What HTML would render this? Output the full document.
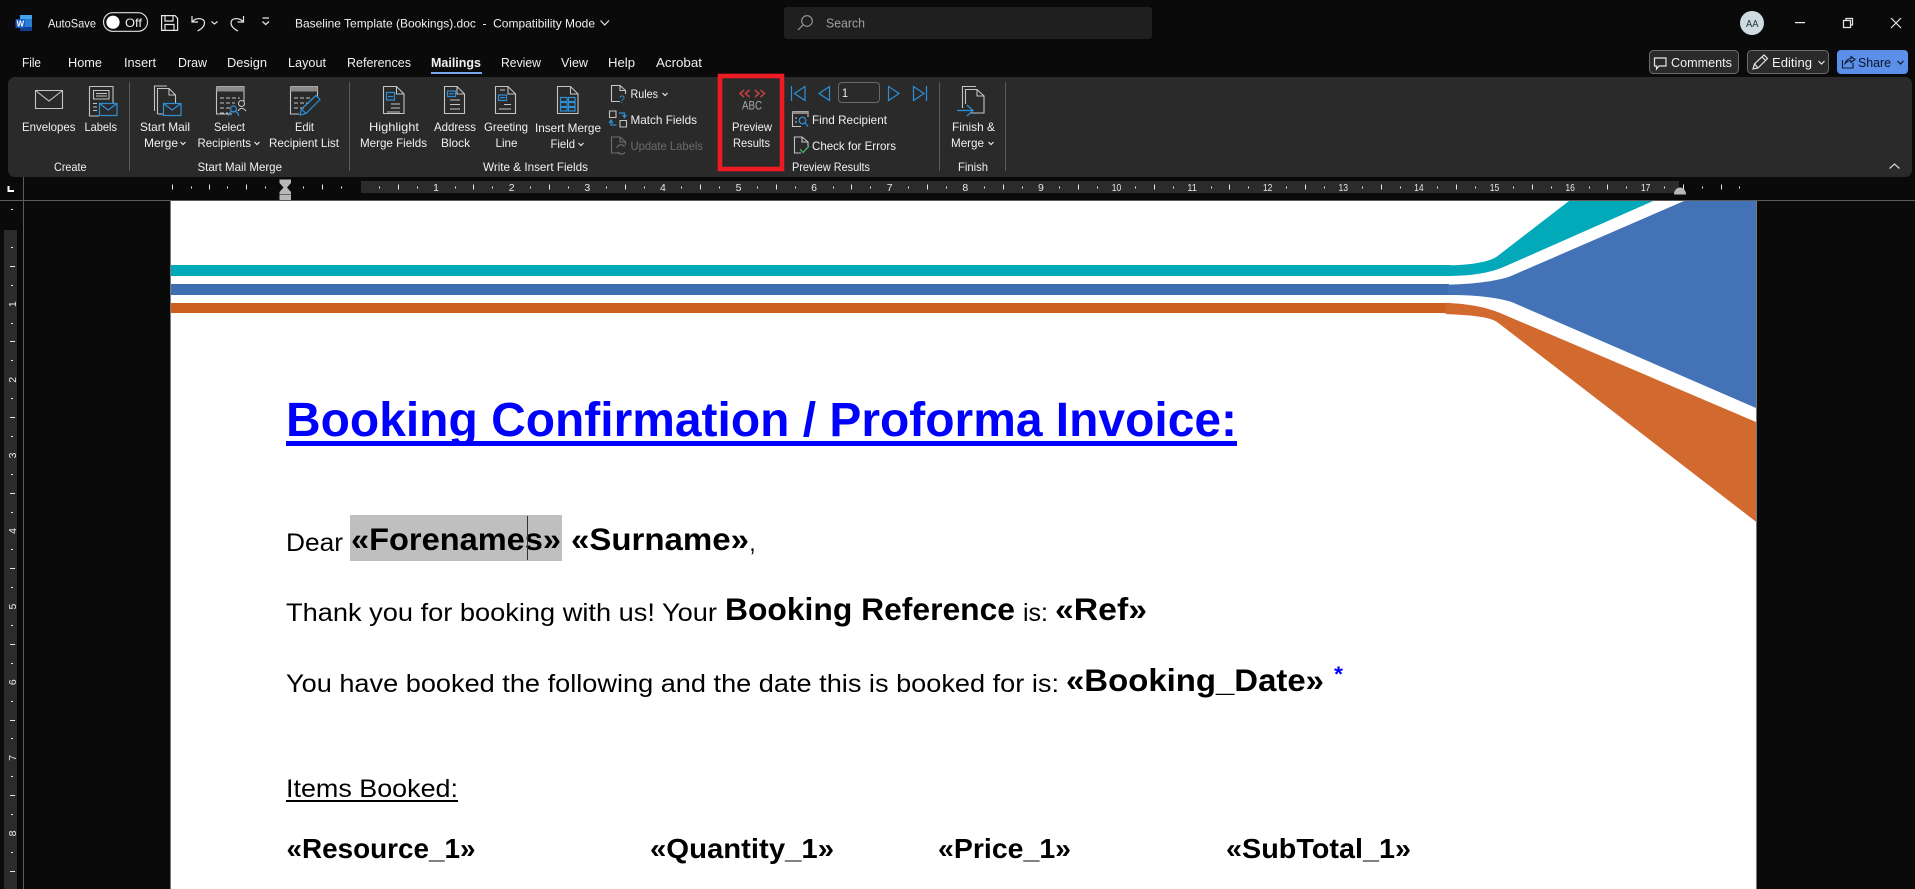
<!DOCTYPE html>
<html><head><meta charset="utf-8"><title>Baseline Template (Bookings).doc</title>
<style>
html,body{margin:0;padding:0;background:#0a0a0a;width:1915px;height:889px;overflow:hidden}
svg{display:block;font-family:"Liberation Sans",sans-serif}
text{white-space:pre}
.u{font-size:12px;fill:#f0f0f0}
.t{font-size:12.5px;fill:#f0f0f0}
.n{font-size:10.5px;fill:#e8e8e8}
.b{font-size:25px;fill:#000}
.bb{font-weight:700;fill:#000}
.ic{fill:none;stroke:#c4c4c4;stroke-width:1.1}
.bl{fill:none;stroke:#2f8fd6;stroke-width:1.2}
.w{fill:none;stroke:#e6e6e6;stroke-width:1.2}
</style></head><body>
<svg width="1915" height="889" viewBox="0 0 1915 889" xmlns="http://www.w3.org/2000/svg">
<rect width="1915" height="889" fill="#0a0a0a"/>

<!-- title bar -->
<rect x="20" y="15" width="12" height="16" rx="1" fill="#2b7cd3"/><rect x="20" y="15" width="12" height="4" fill="#41a5ee"/><rect x="20" y="27" width="12" height="4" fill="#103f91"/>
<rect x="15.5" y="19" width="9.5" height="9" rx="1" fill="#185abd"/><text x="16.6" y="26.6" font-size="8.5" font-weight="700" fill="#fff" textLength="7.5" lengthAdjust="spacingAndGlyphs">W</text>
<text class="u" x="48" y="27.5" textLength="48" lengthAdjust="spacingAndGlyphs">AutoSave</text>
<rect x="103.5" y="12.7" width="44" height="18.6" rx="9.3" fill="none" stroke="#e0e0e0" stroke-width="1.1"/><circle cx="113" cy="22.2" r="6.6" fill="#fff"/><text class="u" x="125" y="27" textLength="17" lengthAdjust="spacingAndGlyphs">Off</text>
<path class="w" d="M161.6 15.6H175L177.6 18.2V30.4H161.6ZM165 15.6V21H173V15.6M165 30.4V24.5H174V30.4"/>
<path class="w" d="M192 16V22H198M192.5 21.5C196 17.5 204.5 17.5 204.5 23C204.5 26 201.5 29 197.5 31"/>
<path class="w" d="M211.5 21.5L214.5 24L217.5 21.5"/>
<path class="w" d="M243.5 16V22H237.5M243 21.5C239 17.5 231 17.5 231 23C231 26 234 29 238 31"/>
<path class="w" d="M262.5 18H269M262.5 21.5L265.7 24.5L269 21.5"/>
<text class="u" x="295" y="27.5" textLength="300" lengthAdjust="spacingAndGlyphs">Baseline Template (Bookings).doc  -  Compatibility Mode</text>
<path class="w" d="M600.5 20.5L604.7 25L609 20.5"/>
<rect x="784" y="7" width="368" height="32" rx="3" fill="#1f1f1f"/>
<circle cx="807" cy="21" r="5.3" fill="none" stroke="#9a9a9a" stroke-width="1.1"/><path d="M803 25L798 30" stroke="#9a9a9a" stroke-width="1.2"/>
<text x="826" y="27.5" font-size="12.5" fill="#a0a0a0" textLength="39" lengthAdjust="spacingAndGlyphs">Search</text>
<circle cx="1752" cy="23" r="12" fill="#cfdbe1"/><text x="1746" y="27" font-size="10.5" fill="#1d3540" textLength="12.5" lengthAdjust="spacingAndGlyphs">AA</text>
<rect x="1795" y="22" width="10" height="1.2" fill="#eee"/>
<path class="w" d="M1843.5 20.5H1850.5V27.5H1843.5ZM1846 20.5V18.5H1852.5V25H1850.5"/>
<path class="w" d="M1891 18L1901 28M1901 18L1891 28"/>

<!-- tabs -->
<text class="t" x="22" y="67" textLength="19" lengthAdjust="spacingAndGlyphs">File</text>
<text class="t" x="68" y="67" textLength="34" lengthAdjust="spacingAndGlyphs">Home</text>
<text class="t" x="124" y="67" textLength="32" lengthAdjust="spacingAndGlyphs">Insert</text>
<text class="t" x="178" y="67" textLength="29" lengthAdjust="spacingAndGlyphs">Draw</text>
<text class="t" x="227" y="67" textLength="40" lengthAdjust="spacingAndGlyphs">Design</text>
<text class="t" x="288" y="67" textLength="38" lengthAdjust="spacingAndGlyphs">Layout</text>
<text class="t" x="347" y="67" textLength="64" lengthAdjust="spacingAndGlyphs">References</text>
<text class="t" x="431" y="67" font-weight="700" fill="#fff" textLength="50" lengthAdjust="spacingAndGlyphs">Mailings</text>
<text class="t" x="501" y="67" textLength="40" lengthAdjust="spacingAndGlyphs">Review</text>
<text class="t" x="561" y="67" textLength="27" lengthAdjust="spacingAndGlyphs">View</text>
<text class="t" x="608" y="67" textLength="27" lengthAdjust="spacingAndGlyphs">Help</text>
<text class="t" x="656" y="67" textLength="46" lengthAdjust="spacingAndGlyphs">Acrobat</text>
<rect x="431" y="72" width="51" height="2" fill="#79a6e8"/>

<!-- top right buttons -->
<rect x="1649.5" y="50.5" width="89" height="23" rx="4" fill="#2a2a2a" stroke="#6c6c6c"/>
<path class="w" d="M1654.5 58H1666V66H1659L1656.5 69V66H1654.5Z"/>
<text class="t" x="1671" y="67" textLength="61" lengthAdjust="spacingAndGlyphs">Comments</text>
<rect x="1747.5" y="50.5" width="81" height="23" rx="4" fill="#2a2a2a" stroke="#6c6c6c"/>
<path class="w" d="M1753 69L1754.5 64L1764 55L1767.5 58.5L1758 68ZM1754.5 64L1758 68M1762 57L1765.5 60.5"/>
<text class="t" x="1772" y="67" textLength="40" lengthAdjust="spacingAndGlyphs">Editing</text>
<path class="w" d="M1818.5 61L1821.5 64L1824.5 61"/>
<rect x="1837" y="50" width="71" height="24" rx="4" fill="#5b8fe9"/>
<path d="M1842.5 60V68H1853V63M1845 63.5C1846 60 1849 58.5 1851 58.5V56.5L1855 59.5L1851 62.5V60.5C1849 60.5 1847 61.5 1845 63.5Z" fill="none" stroke="#0e1a30" stroke-width="1.1"/>
<text x="1858" y="67" font-size="12.5" fill="#0c1526" textLength="33" lengthAdjust="spacingAndGlyphs">Share</text>
<path d="M1897.5 61L1900.5 64L1903.5 61" fill="none" stroke="#0c1526" stroke-width="1.2"/>

<!-- ribbon -->
<rect x="8" y="77" width="1904" height="100" rx="7" fill="#2a2a2a"/>
<rect x="129" y="82" width="1" height="89" fill="#5a5a5a"/><rect x="349" y="82" width="1" height="89" fill="#5a5a5a"/><rect x="939" y="82" width="1" height="89" fill="#5a5a5a"/><rect x="1005" y="82" width="1" height="89" fill="#5a5a5a"/>
<path d="M1889.5 168.5L1894.5 164L1899.5 168.5" fill="none" stroke="#d8d8d8" stroke-width="1.2"/>

<!-- envelopes -->
<path class="ic" d="M35.5 90.5H62.5V108.5H35.5ZM35.5 90.5L49 101L62.5 90.5"/>
<!-- labels -->
<path class="ic" d="M89.5 86.5H113V103M99 116H89.5V86.5M93.5 90.5H109V99H93.5ZM96 93.5H107M96 96H107M93 103.5H97M93 107H97M93 110.5H97"/>
<path class="bl" d="M99.5 103.5H117V115.5H99.5ZM99.5 103.5L108.2 110L117 103.5"/>
<!-- start mail merge -->
<path class="ic" d="M154.5 111V86H167M157.5 114V88.5H169L175.5 95V103M169 88.5V95H175.5M157.5 114H163"/>
<path class="bl" d="M163.5 103.5H181V115.5H163.5ZM163.5 103.5L172.2 110L181 103.5"/>
<!-- select recipients -->
<path class="ic" d="M216.5 86.5H244V102M232 114H216.5V86.5"/><rect x="216.5" y="86.5" width="27.5" height="5" fill="#8a8a8a"/>
<path class="ic" stroke-dasharray="4 2" d="M220 98H240M220 103H235M220 108H230M220 113H228"/>
<circle cx="233.5" cy="109" r="3" class="bl"/><path class="bl" d="M228.5 116C228.5 112 231 111.5 233.5 111.5C236 111.5 238.5 112 238.5 116"/>
<circle cx="241.5" cy="103.5" r="3" class="ic"/><path class="ic" d="M238 111C240 107.5 243.5 107.5 246 111"/>
<!-- edit list -->
<path class="ic" d="M290.5 86.5H317.5V97M290.5 86.5V114H299"/><rect x="290.5" y="86.5" width="27" height="5" fill="#8a8a8a"/>
<path class="ic" stroke-dasharray="4 2" d="M294 98H312M294 103H309M294 108H304"/>
<path class="bl" stroke-width="1.6" d="M300 115L301.5 109L316 95.5L320 99.5L306 113.5ZM301.5 109L306 113.5"/>

<!-- merge docs -->
<path class="ic" d="M383.5 86.5H396.5L404 94V113.5H383.5ZM396.5 86.5V94H404M391 104H400M391 108H400M387 112H400"/><rect x="386.5" y="92.5" width="8" height="7.5" class="bl"/><path class="bl" d="M388 96.5H393"/>
<path class="ic" d="M444.5 86.5H457L464.5 94V113.5H444.5ZM457 86.5V94H464.5M450 100H460M450 104.5H460M450 109H460"/><rect x="447.5" y="91" width="8" height="5.5" class="bl"/><path class="bl" d="M449 93.7H454"/>
<path class="ic" d="M495.5 86.5H508L515.5 94V113.5H495.5ZM508 86.5V94H515.5M500 90H505M504 104.5H511M499 109H511"/><rect x="498.5" y="95" width="8" height="5.5" class="bl"/><path class="bl" d="M500 97.7H505"/>
<path class="ic" d="M557.5 86.5H570.5L578 94V113.5H557.5ZM570.5 86.5V94H578"/><path class="bl" d="M560.5 97.5H567V101.5H560.5ZM568.5 97.5H575V101.5H568.5ZM560.5 102.5H567V106.5H560.5ZM568.5 102.5H575V106.5H568.5ZM560.5 107.5H567V111H560.5ZM568.5 107.5H575V111H568.5Z"/>

<!-- small group icons -->
<path class="ic" d="M620 101.5H611.5V85.5H620L625.5 90.5V94M620 85.5V90.5H625.5"/>
<text x="619" y="103" font-size="11" fill="#2f8fd6" textLength="6" lengthAdjust="spacingAndGlyphs">?</text>
<path class="ic" d="M620 120.5H626.5V127H620ZM609.5 111H616V117.5H609.5Z"/><path class="bl" d="M619 113H624.5V117M622.5 115L624.5 117.5L626.5 115M616.5 125H611V120.5M609 123L611 120L613 123"/>
<path d="M620 153H611.5V137H620L625.5 142V145M620 137V142H625.5" fill="none" stroke="#6e6e6e" stroke-width="1.1"/><path d="M617 148A4 4 0 0 1 624.5 147M625 152A4 4 0 0 1 618 152" fill="none" stroke="#6e6e6e" stroke-width="1.1"/>
<path class="bl" d="M791.5 86V101M805 86.5L794.5 93.5L805 100.5Z"/>
<path class="bl" d="M829.5 86.5L819 93.5L829.5 100.5Z"/>
<rect x="838.5" y="82.5" width="41" height="20" rx="3.5" fill="none" stroke="#6a6a6a"/>
<text class="u" x="842" y="97" textLength="6" lengthAdjust="spacingAndGlyphs">1</text>
<path class="bl" d="M888.5 86.5L899 93.5L888.5 100.5Z"/>
<path class="bl" d="M913.5 86.5L924 93.5L913.5 100.5ZM926.5 86V101"/>
<path class="ic" d="M792.5 111.5H808V117M792.5 111.5V126.5H801M795 118H797M795 122H797"/><rect x="792.5" y="111.5" width="15.5" height="2.5" fill="#8a8a8a"/><circle cx="802.5" cy="120.5" r="3.3" class="bl"/><path class="bl" d="M805 123L808 126.5"/>
<path class="ic" d="M801 153H794.5V137H802L808 142V146M802 137V142H808"/><path d="M800 149L803 152.5L809 146" fill="none" stroke="#49b267" stroke-width="1.3"/>
<!-- finish icon -->
<path class="ic" d="M962.5 108V86.5H976M965.5 104V89.5H977L984 96V113H971M977 89.5V96H984"/>
<path class="bl" d="M957 110.5H972.5M967 105L973 110.5L967 116"/>
<!-- preview -->
<path d="M744 90L740 93.5L744 97M749.5 90L745.5 93.5L749.5 97M755 90L759 93.5L755 97M760.5 90L764.5 93.5L760.5 97" fill="none" stroke="#c7413f" stroke-width="1.5"/>
<text x="742" y="109.5" font-size="11.5" fill="#a8a8a8" textLength="20" lengthAdjust="spacingAndGlyphs">ABC</text>
<rect x="720" y="76" width="62" height="93" fill="none" stroke="#ed1c24" stroke-width="4.6"/>

<!-- ribbon labels -->
<text class="u" x="22" y="131" textLength="53.5" lengthAdjust="spacingAndGlyphs">Envelopes</text>
<text class="u" x="84.5" y="131" textLength="32.5" lengthAdjust="spacingAndGlyphs">Labels</text>
<text class="u" x="140" y="131" textLength="50" lengthAdjust="spacingAndGlyphs">Start Mail</text>
<text class="u" x="144" y="147" textLength="34" lengthAdjust="spacingAndGlyphs">Merge</text>
<text class="u" x="214" y="131" textLength="31" lengthAdjust="spacingAndGlyphs">Select</text>
<text class="u" x="197.5" y="147" textLength="53.5" lengthAdjust="spacingAndGlyphs">Recipients</text>
<text class="u" x="295" y="131" textLength="19" lengthAdjust="spacingAndGlyphs">Edit</text>
<text class="u" x="269" y="147" textLength="70" lengthAdjust="spacingAndGlyphs">Recipient List</text>
<text class="u" x="369" y="131" textLength="50" lengthAdjust="spacingAndGlyphs">Highlight</text>
<text class="u" x="360" y="147" textLength="67" lengthAdjust="spacingAndGlyphs">Merge Fields</text>
<text class="u" x="434" y="131" textLength="42" lengthAdjust="spacingAndGlyphs">Address</text>
<text class="u" x="441" y="147" textLength="29" lengthAdjust="spacingAndGlyphs">Block</text>
<text class="u" x="484" y="131" textLength="44" lengthAdjust="spacingAndGlyphs">Greeting</text>
<text class="u" x="495.5" y="147" textLength="22" lengthAdjust="spacingAndGlyphs">Line</text>
<text class="u" x="535" y="132" textLength="66" lengthAdjust="spacingAndGlyphs">Insert Merge</text>
<text class="u" x="550.5" y="148" textLength="24.5" lengthAdjust="spacingAndGlyphs">Field</text>
<text class="u" x="630.5" y="98" textLength="27.5" lengthAdjust="spacingAndGlyphs">Rules</text>
<text class="u" x="630.5" y="124" textLength="66.5" lengthAdjust="spacingAndGlyphs">Match Fields</text>
<text x="630.5" y="150" font-size="12" fill="#6c6c6c" textLength="72.5" lengthAdjust="spacingAndGlyphs">Update Labels</text>
<text class="u" x="732" y="131" textLength="40" lengthAdjust="spacingAndGlyphs">Preview</text>
<text class="u" x="733" y="147" textLength="37" lengthAdjust="spacingAndGlyphs">Results</text>
<text class="u" x="812" y="124" textLength="75" lengthAdjust="spacingAndGlyphs">Find Recipient</text>
<text class="u" x="812" y="150" textLength="84" lengthAdjust="spacingAndGlyphs">Check for Errors</text>
<text class="u" x="952" y="131" textLength="43" lengthAdjust="spacingAndGlyphs">Finish &amp;</text>
<text class="u" x="951" y="147" textLength="33" lengthAdjust="spacingAndGlyphs">Merge</text>
<text class="u" x="54" y="171" textLength="32.5" lengthAdjust="spacingAndGlyphs">Create</text>
<text class="u" x="197.5" y="171" textLength="84.5" lengthAdjust="spacingAndGlyphs">Start Mail Merge</text>
<text class="u" x="483" y="171" textLength="105" lengthAdjust="spacingAndGlyphs">Write &amp; Insert Fields</text>
<text class="u" x="792" y="171" textLength="78" lengthAdjust="spacingAndGlyphs">Preview Results</text>
<text class="u" x="958" y="171" textLength="30" lengthAdjust="spacingAndGlyphs">Finish</text>
<path class="w" stroke-width="1" d="M180.5 142L183 144.5L185.5 142M254.5 142L257 144.5L259.5 142"/>
<path class="w" stroke-width="1" d="M578.5 143L581 145.5L583.5 143M662.5 93L665 95.5L667.5 93M988.5 142L991 144.5L993.5 142"/>

<!-- horizontal ruler -->
<rect x="361" y="181" width="1318" height="12" fill="#2b2b2b"/>
<path fill="none" stroke="#e8e8e8" stroke-width="1" d="M172.5 184.5v5M209.5 184.5v5M246.5 184.5v5M322.5 184.5v5M398.5 184.5v5M473.5 184.5v5M549.5 184.5v5M625.5 184.5v5M700.5 184.5v5M776.5 184.5v5M851.5 184.5v5M927.5 184.5v5M1003.5 184.5v5M1078.5 184.5v5M1154.5 184.5v5M1229.5 184.5v5M1305.5 184.5v5M1381.5 184.5v5M1456.5 184.5v5M1532.5 184.5v5M1607.5 184.5v5M1683.5 184.5v5M1721.5 184.5v5"/>
<path fill="none" stroke="#e8e8e8" stroke-width="1" d="M191.5 186.5v2M227.5 186.5v2M265.5 186.5v2M303.5 186.5v2M341.5 186.5v2M379.5 186.5v2M417.5 186.5v2M455.5 186.5v2M492.5 186.5v2M530.5 186.5v2M568.5 186.5v2M606.5 186.5v2M644.5 186.5v2M681.5 186.5v2M719.5 186.5v2M757.5 186.5v2M795.5 186.5v2M833.5 186.5v2M870.5 186.5v2M908.5 186.5v2M946.5 186.5v2M984.5 186.5v2M1022.5 186.5v2M1059.5 186.5v2M1097.5 186.5v2M1135.5 186.5v2M1173.5 186.5v2M1211.5 186.5v2M1248.5 186.5v2M1286.5 186.5v2M1324.5 186.5v2M1362.5 186.5v2M1400.5 186.5v2M1437.5 186.5v2M1475.5 186.5v2M1513.5 186.5v2M1551.5 186.5v2M1589.5 186.5v2M1626.5 186.5v2M1664.5 186.5v2M1702.5 186.5v2M1739.5 186.5v2"/>
<g text-anchor="middle">
<text class="n" x="436.1" y="191">1</text><text class="n" x="511.7" y="191">2</text><text class="n" x="587.3" y="191">3</text><text class="n" x="662.9" y="191">4</text><text class="n" x="738.5" y="191">5</text><text class="n" x="814.1" y="191">6</text><text class="n" x="889.7" y="191">7</text><text class="n" x="965.3" y="191">8</text><text class="n" x="1040.9" y="191">9</text><text class="n" x="1116.5" y="191" textLength="9.5" lengthAdjust="spacingAndGlyphs">10</text><text class="n" x="1192.1" y="191" textLength="9.5" lengthAdjust="spacingAndGlyphs">11</text><text class="n" x="1267.7" y="191" textLength="9.5" lengthAdjust="spacingAndGlyphs">12</text><text class="n" x="1343.3" y="191" textLength="9.5" lengthAdjust="spacingAndGlyphs">13</text><text class="n" x="1418.9" y="191" textLength="9.5" lengthAdjust="spacingAndGlyphs">14</text><text class="n" x="1494.5" y="191" textLength="9.5" lengthAdjust="spacingAndGlyphs">15</text><text class="n" x="1570.1" y="191" textLength="9.5" lengthAdjust="spacingAndGlyphs">16</text><text class="n" x="1645.7" y="191" textLength="9.5" lengthAdjust="spacingAndGlyphs">17</text>
</g>
<path d="M279.5 179.5H291V183L287 187.5L291 192V200H279.5V192L283.5 187.5L279.5 183Z" fill="#b8b8b8"/><path d="M279.5 194.5H291" stroke="#666"/>
<path d="M1674 194.5A6 7 0 0 1 1686 194.5Z" fill="#b8b8b8"/>
<path d="M8.5 186V191H14" fill="none" stroke="#fff" stroke-width="2"/>
<rect x="0" y="200" width="1915" height="1" fill="#5c5c5c"/>
<rect x="23" y="177" width="1" height="712" fill="#5c5c5c"/>

<!-- vertical ruler -->
<rect x="4" y="230" width="13" height="659" fill="#2b2b2b"/>
<path fill="none" stroke="#e8e8e8" stroke-width="1" d="M11 209.5h2M11 247.5h2M11 285.5h2M11 323.5h2M11 360.5h2M11 398.5h2M11 436.5h2M11 474.5h2M11 512.5h2M11 549.5h2M11 587.5h2M11 625.5h2M11 663.5h2M11 701.5h2M11 738.5h2M11 776.5h2M11 814.5h2M11 852.5h2"/>
<path fill="none" stroke="#e8e8e8" stroke-width="1" d="M10 266.5h5M10 341.5h5M10 417.5h5M10 493.5h5M10 568.5h5M10 644.5h5M10 720.5h5M10 795.5h5M10 871.5h5"/>
<g font-size="10.5" fill="#e8e8e8" text-anchor="middle">
<text transform="translate(16 304.2) rotate(-90)">1</text><text transform="translate(16 379.8) rotate(-90)">2</text><text transform="translate(16 455.4) rotate(-90)">3</text><text transform="translate(16 531) rotate(-90)">4</text><text transform="translate(16 606.6) rotate(-90)">5</text><text transform="translate(16 682.2) rotate(-90)">6</text><text transform="translate(16 757.8) rotate(-90)">7</text><text transform="translate(16 833.4) rotate(-90)">8</text>
</g>

<!-- page -->
<rect x="170" y="201" width="1587" height="688" fill="#7a7a7a"/>
<rect x="171" y="201" width="1585" height="688" fill="#fff"/>
<rect x="171" y="265" width="1280" height="11" fill="#02a9b9"/>
<rect x="171" y="284" width="1278" height="11" fill="#3e6eb0"/>
<rect x="171" y="303" width="1276" height="10" fill="#cc5f20"/>
<path d="M1449 265.3C1470 265 1490 262 1498 255.7L1569 201H1653L1503 267.3C1490 273 1470 276 1449 276Z" fill="#02a9b9"/>
<path d="M1684 201H1756V408L1511 301.7C1490 296 1470 295 1448 295V284.7C1470 284 1495 282 1511 276Z" fill="#4373b6"/>
<path d="M1445.5 302.7C1470 304 1485 307 1499.5 312.7L1756 422V521.7L1498 322.7C1490 316 1465 315 1445.5 314Z" fill="#d2692e"/>

<!-- document text -->
<text x="286" y="436" font-size="48" font-weight="700" fill="#0000ff" textLength="951" lengthAdjust="spacingAndGlyphs">Booking Confirmation / Proforma Invoice:</text>
<rect x="286" y="441" width="951" height="5" fill="#0000ff"/>

<rect x="350" y="515" width="212" height="46" fill="#bfbfbf"/>
<text class="b" x="286" y="551" textLength="57" lengthAdjust="spacingAndGlyphs">Dear</text>
<text class="bb" x="351" y="550" font-size="31.5" textLength="210" lengthAdjust="spacingAndGlyphs">«Forenames»</text>
<rect x="527" y="516" width="1" height="44" fill="#333"/>
<text class="bb" x="571" y="550" font-size="31.5" textLength="178" lengthAdjust="spacingAndGlyphs">«Surname»</text>
<text class="b" x="749.5" y="551" textLength="6" lengthAdjust="spacingAndGlyphs">,</text>

<text class="b" x="286" y="621" textLength="431" lengthAdjust="spacingAndGlyphs">Thank you for booking with us! Your</text>
<text class="bb" x="725" y="620" font-size="31.5" textLength="290" lengthAdjust="spacingAndGlyphs">Booking Reference</text>
<text class="b" x="1023" y="621" textLength="25" lengthAdjust="spacingAndGlyphs">is:</text>
<text class="bb" x="1055" y="620" font-size="31.5" textLength="92" lengthAdjust="spacingAndGlyphs">«Ref»</text>

<text class="b" x="286" y="692" textLength="773" lengthAdjust="spacingAndGlyphs">You have booked the following and the date this is booked for is:</text>
<text class="bb" x="1066" y="691" font-size="31.5" textLength="258" lengthAdjust="spacingAndGlyphs">«Booking_Date»</text>
<text x="1334" y="681" font-size="21" font-weight="700" fill="#0000ff" textLength="9" lengthAdjust="spacingAndGlyphs">*</text>

<text class="b" x="286" y="797" textLength="172" lengthAdjust="spacingAndGlyphs">Items Booked:</text>
<rect x="286" y="800" width="172" height="2" fill="#000"/>

<text class="bb" x="286.5" y="858" font-size="28" textLength="189" lengthAdjust="spacingAndGlyphs">«Resource_1»</text>
<text class="bb" x="650" y="858" font-size="28" textLength="184" lengthAdjust="spacingAndGlyphs">«Quantity_1»</text>
<text class="bb" x="938" y="858" font-size="28" textLength="133" lengthAdjust="spacingAndGlyphs">«Price_1»</text>
<text class="bb" x="1226" y="858" font-size="28" textLength="185" lengthAdjust="spacingAndGlyphs">«SubTotal_1»</text>
</svg>
</body></html>
